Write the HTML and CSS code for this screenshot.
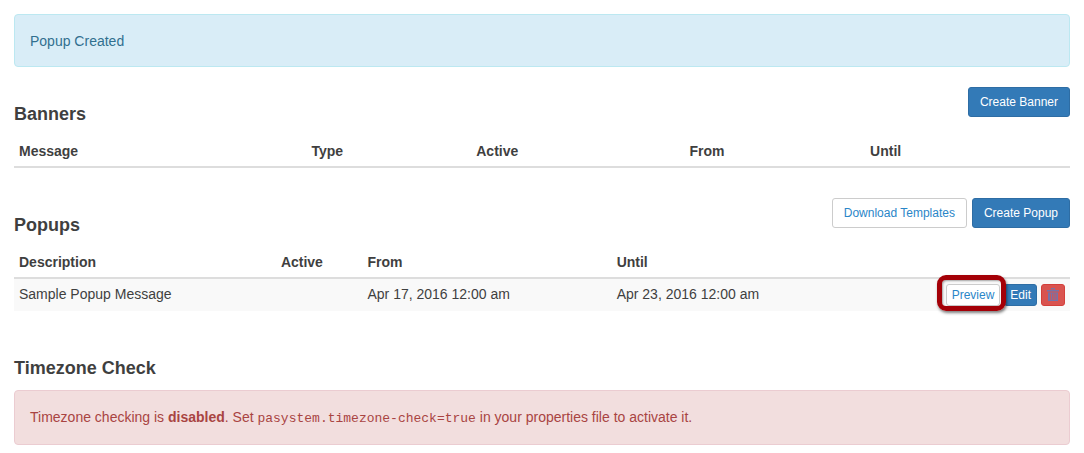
FILE: index.html
```html
<!DOCTYPE html>
<html lang="en">
<head>
<meta charset="utf-8">
<title>Banners and Popups</title>
<link rel="stylesheet" href="styles.css">
</head>
<body>
<main class="page">
  <div class="alert alert-info" role="status">Popup Created</div>

  <section class="section">
    <header class="section-head">
      <h2 class="title">Banners</h2>
      <div class="actions">
        <button type="button" class="btn btn-primary">Create Banner</button>
      </div>
    </header>
    <table class="table banners">
      <thead>
        <tr>
          <th class="b-message" scope="col">Message</th>
          <th class="b-type" scope="col">Type</th>
          <th class="b-active" scope="col">Active</th>
          <th class="b-from" scope="col">From</th>
          <th scope="col">Until</th>
        </tr>
      </thead>
    </table>
  </section>

  <section class="section">
    <header class="section-head">
      <h2 class="title">Popups</h2>
      <div class="actions">
        <button type="button" class="btn btn-default">Download Templates</button>
        <button type="button" class="btn btn-primary">Create Popup</button>
      </div>
    </header>
    <table class="table popups">
      <thead>
        <tr>
          <th class="p-description" scope="col">Description</th>
          <th class="p-active" scope="col">Active</th>
          <th class="p-date" scope="col">From</th>
          <th class="p-date" scope="col">Until</th>
          <td></td>
        </tr>
      </thead>
      <tbody>
        <tr>
          <td>Sample Popup Message</td>
          <td></td>
          <td>Apr 17, 2016 12:00 am</td>
          <td>Apr 23, 2016 12:00 am</td>
          <td>
            <div class="row-actions">
              <span class="highlight"><button type="button" class="btn btn-xs btn-default">Preview</button></span>
              <button type="button" class="btn btn-xs btn-primary">Edit</button>
              <button type="button" class="btn btn-xs btn-danger" aria-label="Delete">
                <svg class="trash" viewBox="0 0 12 14" aria-hidden="true">
                  <path d="M4.5 2V.5h3V2" fill="none" stroke="currentColor"/>
                  <path d="M0 2h12v1.5H0zM1 4.5h10v8.5H1zM3 5.500v6.500h.8v-6.500zM5 5.500v6.500h.8v-6.500zM6.700 5.500v6.500h.8v-6.500zM8.500 5.500v6.500h.8v-6.500z" fill="currentColor" fill-rule="evenodd"/>
                </svg>
              </button>
            </div>
          </td>
        </tr>
      </tbody>
    </table>
  </section>

  <section class="timezone">
    <h2 class="title">Timezone Check</h2>
    <div class="alert alert-danger">Timezone checking is <strong>disabled</strong>. Set <code class="code">pasystem.timezone-check=true</code> in your properties file to activate it.</div>
  </section>
</main>
</body>
</html>
```
FILE: styles.css
```css
* {
  box-sizing: border-box;
}

body {
  margin: 0;
  background: #fff;
  color: #3f3f3f;
  font: 14px/20px "Liberation Sans", Arial, sans-serif;
}

.page {
  padding: 14px 14px 8px;
}

.alert {
  border: 1px solid;
  border-radius: 4px;
}

.alert-info {
  margin-bottom: 20px;
  padding: 16px 15px 15px;
  background: #d9edf7;
  border-color: #bce8f1;
  color: #31708f;
}

.alert-danger {
  padding: 15px 15px 16px;
  background: #f2dede;
  border-color: #ebccd1;
  color: #a94442;
  line-height: 22px;
}

.code {
  font: 13px "Liberation Mono", "Courier New", monospace;
}

.section {
  margin-bottom: 30px;
}

.section-head {
  display: flex;
  justify-content: space-between;
  align-items: flex-start;
  margin-bottom: 12px;
}

.title {
  margin: 0;
  font-size: 18px;
  line-height: 20px;
}

.section-head .title {
  padding-top: 17px;
}

.actions {
  display: flex;
  gap: 5px;
}

.btn {
  padding: 5px 11px;
  border: 1px solid;
  border-radius: 3px;
  font: 12px/18px "Liberation Sans", Arial, sans-serif;
  cursor: pointer;
}

.btn-primary {
  background: #337ab7;
  border-color: #2e6da4;
  color: #fff;
}

.btn-default {
  background: #fff;
  border-color: #ccc;
  color: #2a86c8;
}

.btn-danger {
  background: #d9534f;
  border-color: #d43f3a;
  color: #7672a8;
}

.btn-xs {
  display: flex;
  align-items: center;
  height: 22px;
  padding: 1px 5px;
}

.table {
  width: 100%;
  border-collapse: separate;
  border-spacing: 0;
  table-layout: fixed;
}

.table th,
.table td {
  padding: 5px;
  text-align: left;
  vertical-align: top;
}

.table thead th,
.table thead td {
  border-bottom: 2px solid #ddd;
}

.table tbody tr {
  background: #f9f9f9;
}

.b-message { width: 27.7%; }
.b-type { width: 15.6%; }
.b-active { width: 20.2%; }
.b-from { width: 17.1%; }

.p-description { width: 24.8%; }
.p-active { width: 8.2%; }
.p-date { width: 23.6%; }

.row-actions {
  display: flex;
  justify-content: flex-end;
  gap: 4px;
}

.highlight {
  position: relative;
}

.highlight::after {
  content: "";
  position: absolute;
  inset: -9px -6px -5px -9px;
  border: 5px solid #a40007;
  border-radius: 9px;
  box-shadow: 1px 2px 3px rgba(0, 0, 0, 0.5), inset 1px 1px 2px rgba(0, 0, 0, 0.35);
  pointer-events: none;
}

.trash {
  width: 12px;
  height: 14px;
}

.timezone {
  margin-top: 47px;
}

.timezone .title {
  margin-bottom: 12px;
}
```
